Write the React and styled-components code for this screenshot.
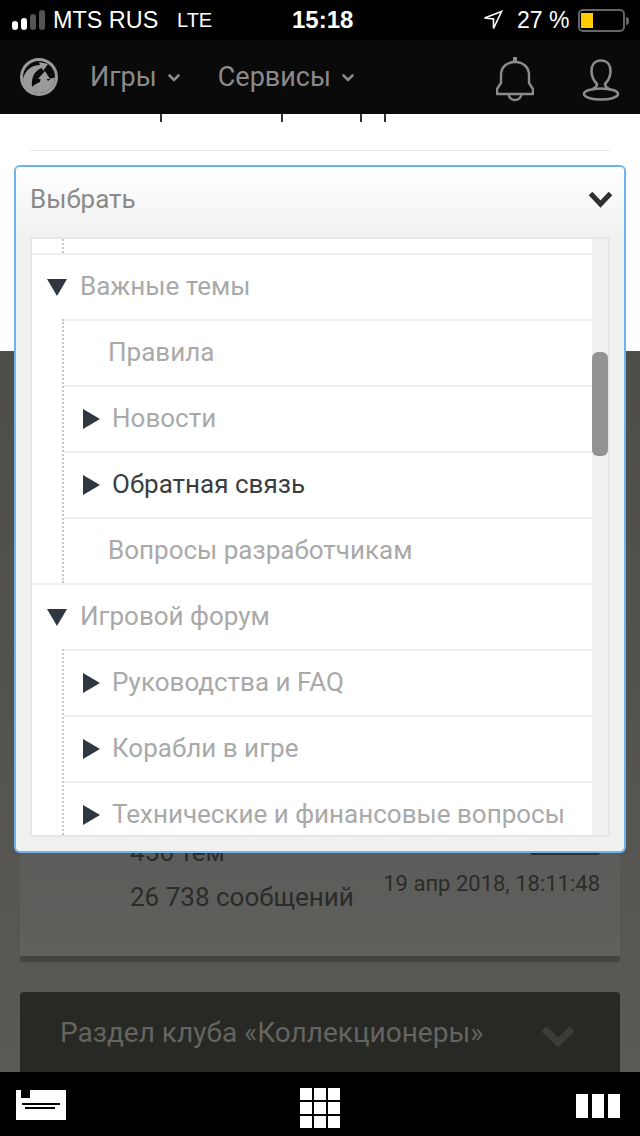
import React from 'react'
import styled, { createGlobalStyle } from 'styled-components'

const GlobalStyle = createGlobalStyle`
  html, body {
    margin: 0;
    padding: 0;
    background: #000;
  }
  * {
    box-sizing: border-box;
  }
`

const Page = styled.div`
  position: relative;
  width: 640px;
  height: 1136px;
  overflow: hidden;
  display: flex;
  flex-direction: column;
  font-family: Roboto, 'Liberation Sans', sans-serif;
  background: #000;
`

/* ==== status bar ==== */
const StatusBar = styled.div`
  height: 40px;
  flex: none;
  display: flex;
  align-items: center;
  background: #000;
  color: #fff;
  font-family: 'Liberation Sans', Arial, sans-serif;
  font-size: 23.4px;
  padding-left: 12px;
`
const Signal = styled.div`
  display: flex;
  align-items: flex-end;
  gap: 3px;
  height: 20px;
  margin: 0 8px 0 0;
`
const SignalBar = styled.span`
  width: 6px;
  height: ${(p) => p.$h}px;
  border-radius: 3px;
  background: ${(p) => (p.$on ? '#fff' : '#555')};
`
const Carrier = styled.span`
  width: 124px;
`
const Network = styled.span`
  width: 115px;
  font-size: 20px;
`
const Clock = styled.span`
  width: 191px;
  font-weight: 700;
  font-size: 24px;
`
const Percent = styled.span`
  margin-left: 14px;
  width: 61px;
  font-size: 23px;
`
const Battery = styled.div`
  position: relative;
  width: 47px;
  height: 23px;
  border: 2px solid #666;
  border-radius: 5px;
  padding: 2px 1px;
  &::after {
    content: '';
    position: absolute;
    right: -6px;
    top: 6px;
    width: 3px;
    height: 8px;
    background: #666;
    border-radius: 0 3px 3px 0;
  }
`
const BatteryFill = styled.div`
  width: 12px;
  height: 100%;
  background: #fc0;
`

/* ==== nav ==== */
const Nav = styled.nav`
  position: relative;
  z-index: 2;
  height: 74px;
  flex: none;
  display: flex;
  align-items: center;
  background: #0a0a0a;
  padding: 0 20px 0 19px;
`
const NavItem = styled.div`
  display: flex;
  align-items: center;
  gap: 10px;
  margin-left: ${(p) => p.$ml}px;
  color: #8b8b8b;
  font-size: 27px;
`
const NavIcons = styled.div`
  margin-left: auto;
  display: flex;
  align-items: center;
  gap: 48px;
  padding-top: 5px;
`

/* ==== page under the nav ==== */
const WhiteBlock = styled.section`
  height: 237px;
  flex: none;
  background: #fff;
`
const CutText = styled.div`
  display: flex;
  padding-left: 160px;
  height: 8px;
`
const Stub = styled.span`
  width: 2px;
  height: 8px;
  background: #333;
  margin-right: ${(p) => p.$mr}px;
`
const Rule = styled.hr`
  margin: 28px 30px 0;
  border: 0;
  height: 1px;
  background: #e8e8e8;
`
const DarkBlock = styled.section`
  flex: 1;
  min-height: 0;
  overflow: hidden;
  background: linear-gradient(#4e4e49, #5a5955);
  padding: 20px 20px 0;
`
const ForumCard = styled.div`
  height: 591px;
  display: flex;
  align-items: flex-end;
  justify-content: space-between;
  padding: 0 20px 45px 110px;
  background: linear-gradient(#575754 0%, #5c5c5a 85%, #60605d 100%);
  border-bottom: 6px solid #44443e;
  border-radius: 0 0 4px 4px;
  color: #2b2b29;
  font-size: 26px;
`
const Stats = styled.div`
  display: flex;
  flex-direction: column;
  gap: 17px;
  line-height: 28px;
`
const LastPost = styled.div`
  display: flex;
  flex-direction: column;
  align-items: flex-end;
  padding-bottom: 14px;
  font-size: 22px;
  line-height: 26px;
`
const ReplyButton = styled.div`
  width: 70px;
  height: 4px;
  margin-bottom: 16px;
  background: #2f2f2d;
  border-radius: 0 0 3px 3px;
`
const SectionHead = styled.div`
  height: 90px;
  margin-top: 30px;
  display: flex;
  justify-content: space-between;
  padding: 26px 43px 0 40px;
  background: #282824;
  border-radius: 4px 4px 0 0;
  color: #646461;
  font-size: 28px;
  line-height: 30px;
`
const SectionToggle = styled.span`
  margin-top: 6px;
`
const BottomBar = styled.footer`
  height: 64px;
  flex: none;
  display: flex;
  justify-content: space-between;
  padding: 0 20px 0 16px;
  background: #000;
`
const GridSvg = styled.svg`
  margin-right: 2px;
`

/* ==== dropdown ==== */
const Dropdown = styled.div`
  position: absolute;
  z-index: 3;
  left: 14px;
  top: 165px;
  width: 612px;
  height: 688px;
  display: flex;
  flex-direction: column;
  border: 2px solid #6db3ee;
  border-radius: 6px;
  background: #f1f1f1;
  padding-bottom: 14px;
`
const DropHead = styled.div`
  height: 70px;
  flex: none;
  display: flex;
  align-items: center;
  justify-content: space-between;
  padding: 0 10px 7px 14px;
  border-radius: 4px 4px 0 0;
  background: linear-gradient(#fff, #f1f1f1);
  color: #8a8a8a;
  font-size: 26px;
`
const ListBox = styled.div`
  flex: 1;
  min-height: 0;
  margin: 0 14px;
  display: flex;
  overflow: hidden;
  border: 2px solid #e6e6e6;
  background: #fff;
`
const Tree = styled.div`
  flex: 1;
  min-width: 0;
  overflow: hidden;
`
const Track = styled.div`
  width: 16px;
  flex: none;
  background: #f1f1f1;
  padding-top: 113px;
`
const Thumb = styled.div`
  height: 104px;
  background: #939393;
  border-radius: 6px;
`
const Branch = styled.div`
  margin-left: 30px;
  border-left: 2px dotted #c8c8c8;
  height: ${(p) => (p.$h ? `${p.$h}px` : 'auto')};
`
const Row = styled.div`
  height: 66px;
  display: flex;
  align-items: center;
  border-top: 2px solid #f0f0f0;
  padding-left: ${(p) => p.$pl}px;
  padding-bottom: 2px;
  color: ${(p) => (p.$active ? '#3a3d40' : '#a9a9a9')};
  font-size: 26px;
`
const TriDown = styled.span`
  width: 0;
  height: 0;
  margin: 2px 13px 0 0;
  border-left: 10px solid transparent;
  border-right: 10px solid transparent;
  border-top: 17px solid #2f3740;
`
const TriRight = styled.span`
  width: 0;
  height: 0;
  margin: 2px 12px 0 0;
  border-top: 10px solid transparent;
  border-bottom: 10px solid transparent;
  border-left: 17px solid #2f3740;
`

const Chevron = ({ w, h, sw, color }) => (
  <svg width={w} height={h} viewBox={`0 0 ${w} ${h}`} fill='none'>
    <path
      d={`M${sw * 0.7} ${sw * 0.7} L${w / 2} ${h - sw * 0.8} L${w - sw * 0.7} ${sw * 0.7}`}
      stroke={color}
      strokeWidth={sw}
    />
  </svg>
)

const Logo = () => (
  <svg width='40' height='40' viewBox='0 0 40 40'>
    <circle cx='20' cy='20' r='19' fill='#9b9b9b' />
    <circle cx='20' cy='20' r='16' fill='#0a0a0a' />
    <path
      d='M4 22 C6 13 13 8 21 8 L20 5 L29 7 L24 14 L23 11 C16 13 12 20 13 30 C15 28 18 26 21 25 L21.5 22 L19 22 L26 14 L31 22 L28 22 C28.5 25 30 24 32 21 C34 22 36 20 36 20 C36 29 29 36 20 36 C11 36 4 30 4 22 Z'
      fill='#9b9b9b'
    />
  </svg>
)

const Bell = () => (
  <svg width='38' height='46' viewBox='0 0 38 46' fill='none' stroke='#8b8b8b' strokeWidth='2.4'>
    <path d='M17 0 H21 V5 H17 Z' fill='#8b8b8b' stroke='none' />
    <path d='M5 26 V18 C5 10 11 5 19 5 C27 5 33 10 33 18 V26 L37 32 V37 H1 V32 Z' strokeLinejoin='round' />
    <path d='M12.5 37 C13 41 16 43 19 43 C22 43 25 41 25.5 37' />
  </svg>
)

const User = () => (
  <svg width='38' height='42' viewBox='0 0 38 42' fill='none' stroke='#8b8b8b' strokeWidth='2.6'>
    <path d='M19 1.5 C12 1.5 9.5 7 9.5 12 C9.5 18 12 22 15 25 C15 28 13 29 10 30.5' />
    <path d='M19 1.5 C26 1.5 28.5 7 28.5 12 C28.5 18 26 22 23 25 C23 28 25 29 28 30.5' />
    <ellipse cx='19' cy='35' rx='17' ry='5.5' />
  </svg>
)

const LocationArrow = () => (
  <svg width='20' height='20' viewBox='0 0 20 20' fill='none' stroke='#fff' strokeWidth='1.6' strokeLinejoin='miter'>
    <path d='M18.5 1.5 L1.5 8 L10.5 9 L10.5 18.5 Z' />
  </svg>
)

const PostsIcon = () => (
  <svg width='50' height='64' viewBox='0 0 50 64'>
    <path d='M0 18 H5 V26 H14 V18 H50 V48 H0 Z' fill='#fff' />
    <rect x='6' y='31' width='38' height='2' fill='#000' />
    <rect x='9' y='35' width='30' height='2' fill='#000' />
  </svg>
)

const GridIcon = () => (
  <GridSvg width='40' height='64' viewBox='0 0 40 64' fill='#fff'>
    {[16, 30, 44].map((y) =>
      [0, 14, 28].map((x) => <rect key={`${x}-${y}`} x={x} y={y} width='12' height='12' />)
    )}
  </GridSvg>
)

const ColumnsIcon = () => (
  <svg width='44' height='64' viewBox='0 0 44 64' fill='#fff'>
    <rect x='0' y='22' width='12' height='24' />
    <rect x='16' y='22' width='12' height='24' />
    <rect x='32' y='22' width='12' height='24' />
  </svg>
)

const App = () => {
  return (
    <Page>
      <GlobalStyle />
      <StatusBar>
        <Signal>
          <SignalBar $on $h={9} />
          <SignalBar $on $h={12} />
          <SignalBar $h={16} />
          <SignalBar $h={20} />
        </Signal>
        <Carrier>MTS RUS</Carrier>
        <Network>LTE</Network>
        <Clock>15:18</Clock>
        <LocationArrow />
        <Percent>27 %</Percent>
        <Battery>
          <BatteryFill />
        </Battery>
      </StatusBar>

      <Nav>
        <Logo />
        <NavItem $ml={31}>
          Игры <Chevron w={14} h={9} sw={2.5} color='#8b8b8b' />
        </NavItem>
        <NavItem $ml={37}>
          Сервисы <Chevron w={14} h={9} sw={2.5} color='#8b8b8b' />
        </NavItem>
        <NavIcons>
          <Bell />
          <User />
        </NavIcons>
      </Nav>

      <WhiteBlock>
        <CutText>
          <Stub $mr={119} />
          <Stub $mr={77} />
          <Stub $mr={22} />
          <Stub $mr={0} />
        </CutText>
        <Rule />
      </WhiteBlock>

      <DarkBlock>
        <ForumCard>
          <Stats>
            <span>456 тем</span>
            <span>26 738 сообщений</span>
          </Stats>
          <LastPost>
            <ReplyButton />
            <span>19 апр 2018, 18:11:48</span>
          </LastPost>
        </ForumCard>
        <SectionHead>
          <span>Раздел клуба «Коллекционеры»</span>
          <SectionToggle>
            <Chevron w={38} h={24} sw={7} color='#3c3c38' />
          </SectionToggle>
        </SectionHead>
      </DarkBlock>

      <BottomBar>
        <PostsIcon />
        <GridIcon />
        <ColumnsIcon />
      </BottomBar>

      <Dropdown>
        <DropHead>
          Выбрать
          <Chevron w={27} h={18} sw={5} color='#2f2f2f' />
        </DropHead>
        <ListBox>
          <Tree>
            <Branch $h={14} />
            <Row $pl={15}>
              <TriDown />
              Важные темы
            </Row>
            <Branch>
              <Row $pl={44}>Правила</Row>
              <Row $pl={19}>
                <TriRight />
                Новости
              </Row>
              <Row $pl={19} $active>
                <TriRight />
                Обратная связь
              </Row>
              <Row $pl={44}>Вопросы разработчикам</Row>
            </Branch>
            <Row $pl={15}>
              <TriDown />
              Игровой форум
            </Row>
            <Branch>
              <Row $pl={19}>
                <TriRight />
                Руководства и FAQ
              </Row>
              <Row $pl={19}>
                <TriRight />
                Корабли в игре
              </Row>
              <Row $pl={19}>
                <TriRight />
                Технические и финансовые вопросы
              </Row>
            </Branch>
          </Tree>
          <Track>
            <Thumb />
          </Track>
        </ListBox>
      </Dropdown>
    </Page>
  )
}

export default App
